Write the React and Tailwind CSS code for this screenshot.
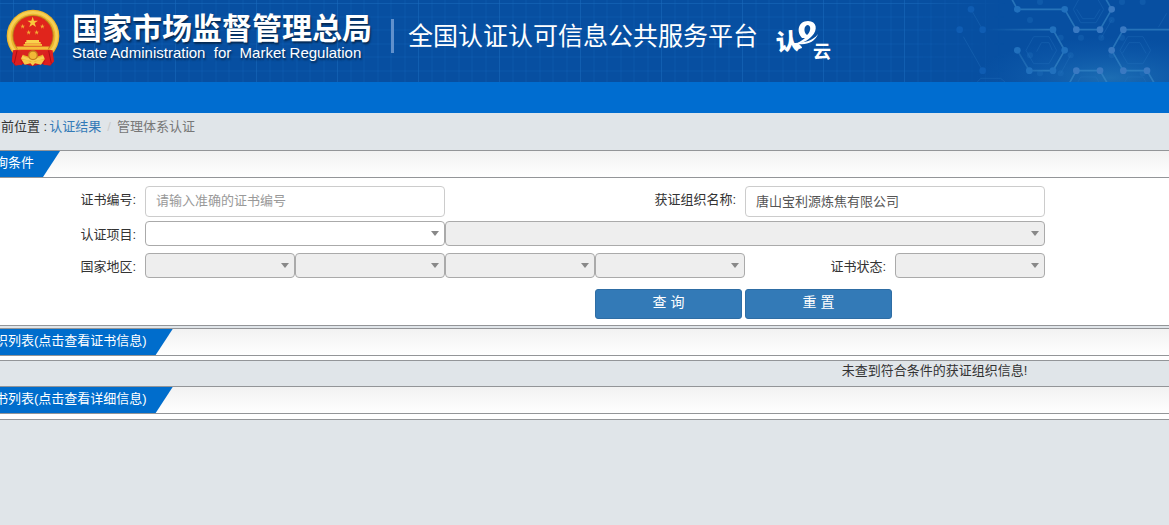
import React, { useState } from 'react';

const FONT = "font-['Liberation_Sans','Noto_Sans_CJK_SC',sans-serif]";

const Emblem = () => (
    <svg viewBox="17 27 162 174" className="w-[54px] h-[58px] shrink-0" aria-hidden="true">
        <path d="M40 148 L34 184 L45 197 L66 192 L97 198 L128 192 L150 197 L161 184 L155 148 Z" fill="#c9151b" />
        <circle cx="98" cy="108" r="79" fill="#eeb52c" />
        <circle cx="98" cy="108" r="71" fill="none" stroke="#f6cf55" strokeWidth="8" />
        <circle cx="98" cy="107" r="62" fill="#b98520" />
        <circle cx="98" cy="107" r="59" fill="#e0251c" />
        <path d="M97 50 L101 62 L113 62 L103 69 L107 81 L97 74 L87 81 L91 69 L81 62 L93 62 Z" fill="#f8c93c" />
        {[[67, 79], [126, 79], [85, 97], [109, 97]].map(([x, y]) => (
            <path key={x} transform={`translate(${x} ${y})`} d="M0 -7 L2 -2 L7 -2 L3 1 L4 7 L0 3 L-4 7 L-3 1 L-7 -2 L-2 -2 Z" fill="#f3ae35" />
        ))}
        <path d="M78 120 H116 V126 H121 V131 H74 V126 H78 Z" fill="#f9d24c" />
        <path d="M70 132 H125 V138 H147 L142 149 H53 L48 138 H70 Z" fill="#f4bd39" />
        <path d="M48 139 H147" stroke="#d5371f" strokeWidth="2" />
        <path d="M38 151 Q57 145 70 158 L60 180 L66 195 L48 196 L35 185 Z" fill="#dc1f20" />
        <path d="M157 151 Q138 145 125 158 L135 180 L129 195 L147 196 L160 185 Z" fill="#dc1f20" />
        <path d="M50 152 L42 190 M145 152 L153 190" stroke="#a90e16" strokeWidth="3" />
        <path d="M53 152 H142 Q128 170 97 170 Q67 170 53 152 Z" fill="#d82420" />
        <circle cx="98" cy="166" r="13" fill="#f2b936" stroke="#c57c1c" strokeWidth="4" />
        <path d="M64 179 Q81 178 91 186 L97 181 L104 186 Q114 178 132 179 L122 194 L104 190 L97 197 L90 190 L73 194 Z" fill="#f5c94a" />
    </svg>
);

const CloudLogo = () => (
    <svg viewBox="0 0 56 42" className="w-14 h-[42px] shrink-0" role="img" aria-label="认e云">
        <g fill="#fff" fontWeight="700" className={FONT}>
            <text x="0" y="30" fontSize="23" fontWeight="900" transform="rotate(-4 12 22)">认</text>
            <text x="37" y="38" fontSize="18">云</text>
        </g>
        <path
            fillRule="evenodd"
            d="M26 18 C20 12 22 1 32 1 C41 1 42 10 36 16 C31 21 27 23 20 24 C23 22 27 20 29 18 Z M31 15 C34 13 36 6 32 5 C28 5 27 12 31 15 Z"
            fill="#fff"
        />
        <path d="M15 23 C28 23 37 21 42 14 C39 22 31 25 23 24 C26 27 28 28 23 29 C20 28 18 26 15 23 Z" fill="#fff" />
    </svg>
);

const GridPattern = () => (
    <svg className="absolute inset-0 w-full h-full" aria-hidden="true">
        <defs>
            <pattern id="cells" width="81" height="81" x="13" y="3" patternUnits="userSpaceOnUse">
                <path d="M14 0V81M27 0V81M41 0V81M54 0V81M68 0V81M0 14H81M0 27H81M0 41H81M0 54H81M0 68H81" stroke="#1262b6" strokeOpacity=".4" />
                <path d="M.5 0V81M0 .5H81" stroke="#1b6dc0" strokeOpacity=".5" />
            </pattern>
            <linearGradient id="fade">
                <stop offset="0" stopColor="#fff" />
                <stop offset=".78" stopColor="#fff" />
                <stop offset=".86" stopColor="#000" />
            </linearGradient>
            <mask id="fadeMask">
                <rect width="100%" height="100%" fill="url(#fade)" />
            </mask>
        </defs>
        <rect width="100%" height="100%" fill="url(#cells)" mask="url(#fadeMask)" />
    </svg>
);

const DOTS = [[213, 28], [248, 89], [248, 212], [179, 89], [352, 28], [494, 28], [635, 28], [459, 89], [529, 89], [600, 89], [670, 89], [352, 151], [494, 151], [635, 151], [388, 212], [459, 212], [529, 212], [600, 212], [670, 212], [741, 212]];
const FAINT_DOTS = [[543, 113], [604, 113], [512, 166], [482, 220], [420, 220], [390, 166], [390, 60], [635, 60], [666, 6], [728, 6], [728, 220], [666, 113], [420, 6], [482, 113], [635, 166]];

const dotColor = (x) => {
    if (x < 300) return '#0f5cb2';
    return x < 500 ? '#2170bd' : '#3a79c2';
};

const Molecules = () => (
    <svg viewBox="0 0 807 246" className="absolute right-0 top-0 w-[269px] h-[82px]" aria-hidden="true">
        <defs>
            <radialGradient id="glow" cx=".78" cy=".95" r=".5">
                <stop offset="0" stopColor="#2b82c0" stopOpacity=".6" />
                <stop offset="1" stopColor="#1565b8" stopOpacity="0" />
            </radialGradient>
            <linearGradient id="tail" gradientUnits="userSpaceOnUse" x1="260" y1="0" x2="440" y2="0">
                <stop offset="0" stopColor="#3b8bc9" stopOpacity="0" />
                <stop offset="1" stopColor="#3b8bc9" />
            </linearGradient>
        </defs>
        <rect width="807" height="246" fill="url(#glow)" />
        <g fill="none" stroke="#2a78c2" strokeWidth="3" opacity=".3">
            <path d="M378 151 L401 110 H447 L470 151 L447 191 H401 Z M410 155 L424 128 H447 L457 151" />
            <path d="M660 151 L683 110 H729 L752 151 L729 191 H683 Z M667 160 L687 128 H720 L738 160" />
            <path d="M520 28 L542 -12 H588 L611 28 L588 68 H542 Z M530 28 L548 56 H583 L600 28" />
            <path d="M520 270 L542 231 H588 L611 270 M660 270 L683 231 H729 L752 270 M232 246 L242 235 H302 L315 246" />
            <path d="M604 113 L635 60 M482 220 L512 166 M213 28 L248 89 M190 110 L248 212 M775 82 L800 40" />
        </g>
        <g fill="none" stroke="#3b8bc9" strokeWidth="5" opacity=".6">
            <path d="M336 -2 L352 28 H494 L529 89 H600 L635 28 L618 -2" />
            <path d="M260 89 H459 L494 151 L459 212 H388 L352 151" stroke="url(#tail)" />
            <path d="M807 89 H670 L635 151 L670 212 H741 L762 248" />
            <path d="M509 248 L529 212 H600 L621 248" />
        </g>
        <g fill="#2474bf" opacity=".3">
            {FAINT_DOTS.map(([x, y]) => <circle key={`${x}-${y}`} cx={x} cy={y} r="9" />)}
        </g>
        {DOTS.map(([x, y]) => (
            <circle key={`${x}-${y}`} cx={x} cy={y} r="10" fill={dotColor(x)} />
        ))}
    </svg>
);

const Header = () => (
    <header>
        <div className="relative h-[82px] overflow-hidden bg-[#074fa1]">
            <GridPattern />
            <Molecules />
            <div className="relative flex items-start text-white whitespace-nowrap">
                <div className="pl-[6px] pt-[9px]">
                    <Emblem />
                </div>
                <div className="pl-3 pt-[13px] w-[331px] text-shadow-[1px_2px_2px_rgb(0_0_0/0.5)]">
                    <h1 className="text-[30px] leading-8 font-bold">国家市场监督管理总局</h1>
                    <p className="text-[15px] leading-4 whitespace-pre">State Administration  for  Market Regulation</p>
                </div>
                <div className="mt-[19px] w-[3px] h-[34px] bg-[#6090cc]"></div>
                <h2 className="pl-[14px] pt-5 text-[25px] leading-8">全国认证认可信息公共服务平台</h2>
                <div className="pl-[18px] pt-5">
                    <CloudLogo />
                </div>
            </div>
        </div>
        <nav className="h-[31px] bg-[#006dd0]"></nav>
    </header>
);

const PanelTitle = ({ children }) => (
    <div className="flex h-7 overflow-hidden border-y border-[#939598] bg-linear-to-b from-[#f2f2f2] to-white">
        <h3 className="-ml-[18px] pr-[26px] text-white leading-6 whitespace-nowrap bg-[#006dcc] [clip-path:polygon(0_0,100%_0,calc(100%-17px)_100%,0_100%)]">
            {children}
        </h3>
    </div>
);

const Label = ({ htmlFor, className = '', children }) => (
    <label htmlFor={htmlFor} className={`pr-[9px] text-right leading-7 whitespace-nowrap ${className}`}>{children}</label>
);

const Select = ({ id, label, disabled, className = '' }) => (
    <div className={`relative h-[25px] ${className}`}>
        <select
            id={id}
            aria-label={label}
            disabled={disabled}
            className="block w-full h-full appearance-none rounded-[4px] border border-[#aaa] bg-white disabled:bg-[#eee] disabled:opacity-100"
        >
            <option value=""></option>
        </select>
        <svg viewBox="0 0 8 5" className="absolute right-[6px] top-[10px] w-2 h-[5px] pointer-events-none" aria-hidden="true">
            <path d="M0 0H8L4 5Z" fill="#888" />
        </svg>
    </div>
);

const rowClass = 'grid grid-cols-[145fr_repeat(6,150fr)_124fr]';
const inputClass = 'block w-full h-[31px] rounded-[4px] border border-[#ccc] bg-white px-[10px] pb-[2px] text-[#555] placeholder:text-[#999]';
const buttonClass = 'mr-[3px] h-[30px] rounded-[3px] border border-[#2e6da4] bg-[#337ab7] pb-1 text-sm text-white';

const SearchForm = () => {
    const [certNo, setCertNo] = useState('');
    const [orgName, setOrgName] = useState('唐山宝利源炼焦有限公司');

    const reset = () => {
        setCertNo('');
        setOrgName('');
    };

    return (
        <form onSubmit={(e) => e.preventDefault()} className="border-b border-[#939598] bg-white pt-2 pb-[6px]">
            <div className={rowClass}>
                <Label htmlFor="certNo">证书编号:</Label>
                <div className="col-span-2">
                    <input id="certNo" value={certNo} onChange={(e) => setCertNo(e.target.value)} placeholder="请输入准确的证书编号" className={inputClass} />
                </div>
                <Label htmlFor="orgName" className="col-span-2">获证组织名称:</Label>
                <div className="col-span-2">
                    <input id="orgName" value={orgName} onChange={(e) => setOrgName(e.target.value)} className={inputClass} />
                </div>
            </div>
            <div className={`mt-1 ${rowClass}`}>
                <Label htmlFor="project">认证项目:</Label>
                <Select id="project" className="col-span-2" />
                <Select label="认证项目明细" disabled className="col-span-4" />
            </div>
            <div className={`mt-1 ${rowClass}`}>
                <Label htmlFor="country">国家地区:</Label>
                <Select id="country" disabled />
                <Select label="省" disabled />
                <Select label="市" disabled />
                <Select label="区县" disabled />
                <Label htmlFor="status">证书状态:</Label>
                <Select id="status" disabled />
            </div>
            <div className={`mt-2 ${rowClass}`}>
                <button type="submit" className={`col-start-5 ${buttonClass}`}>查 询</button>
                <button type="button" onClick={reset} className={buttonClass}>重 置</button>
            </div>
        </form>
    );
};

export default function App() {
    return (
        <div className={`min-h-screen overflow-x-hidden bg-[#e0e5e9] text-[13px] text-[#333] ${FONT}`}>
            <Header />
            <div className="-ml-3 h-[37px] flex gap-[2px] pt-1 leading-5 whitespace-nowrap">
                <span>当前位置 :</span>
                <a href="#results" className="text-[#337ab7]">认证结果</a>
                <span className="px-1 text-[#ccc]">/</span>
                <span className="text-[#777]">管理体系认证</span>
            </div>
            <PanelTitle>查询条件</PanelTitle>
            <SearchForm />
            <div className="mt-[2px]">
                <PanelTitle>组织列表(点击查看证书信息)</PanelTitle>
                <div className="h-[5px] border-b border-[#939598] bg-white"></div>
                <p className="h-[25px] pl-[72%] leading-5 whitespace-nowrap">未查到符合条件的获证组织信息!</p>
            </div>
            <PanelTitle>证书列表(点击查看详细信息)</PanelTitle>
            <div className="h-[6px] border-b border-[#939598] bg-white"></div>
        </div>
    );
}
